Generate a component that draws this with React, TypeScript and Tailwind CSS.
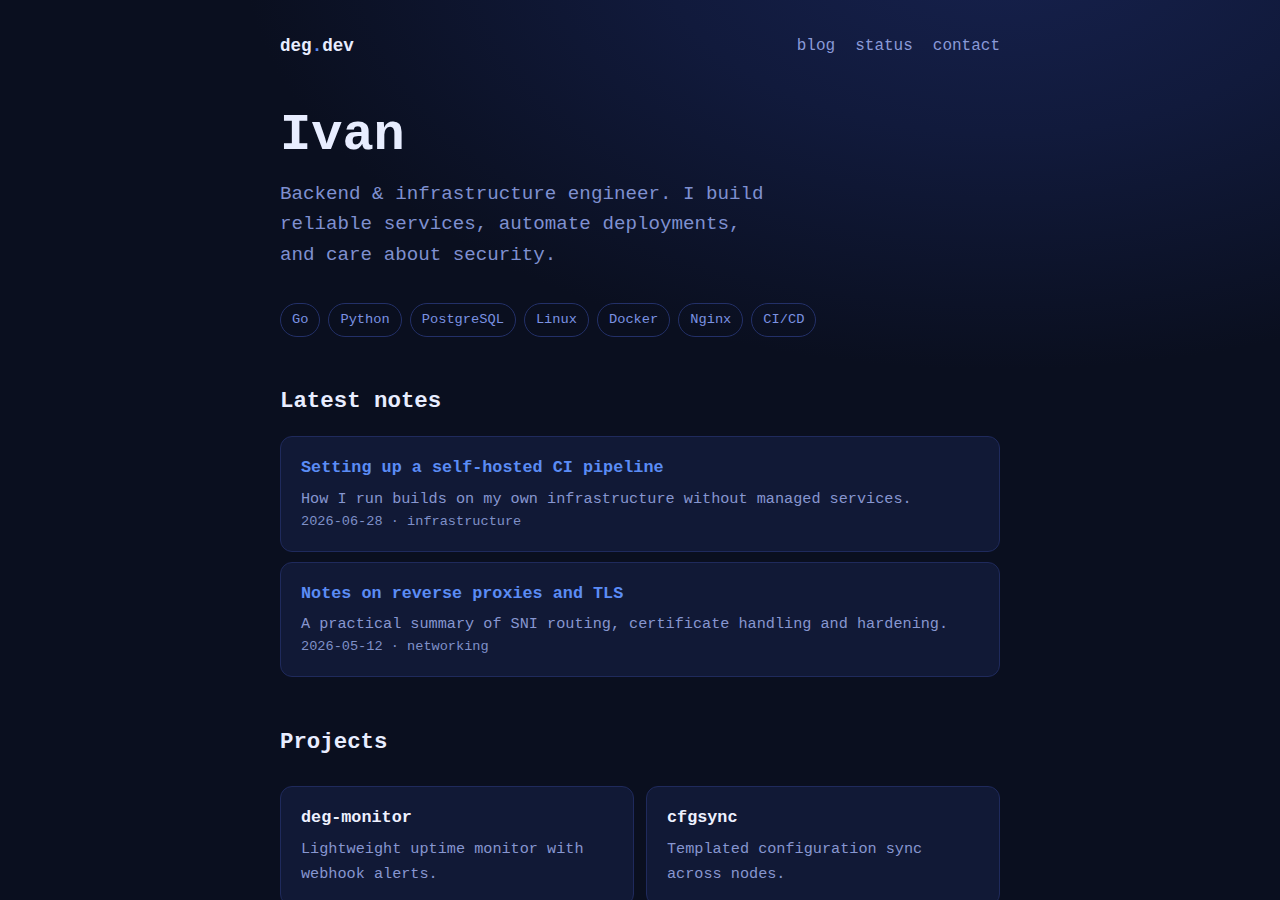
import React from 'react';

const tags = ['Go', 'Python', 'PostgreSQL', 'Linux', 'Docker', 'Nginx', 'CI/CD'];

const notes = [
  {
    title: 'Setting up a self-hosted CI pipeline',
    desc: 'How I run builds on my own infrastructure without managed services.',
    date: '2026-06-28',
    tag: 'infrastructure',
  },
  {
    title: 'Notes on reverse proxies and TLS',
    desc: 'A practical summary of SNI routing, certificate handling and hardening.',
    date: '2026-05-12',
    tag: 'networking',
  },
];

const projects = [
  { name: 'deg-monitor', desc: 'Lightweight uptime monitor with webhook alerts.' },
  { name: 'cfgsync', desc: 'Templated configuration sync across nodes.' },
];

export default function App() {
  return (
    <div className="min-h-screen bg-[#0a0f1f] bg-[radial-gradient(ellipse_760px_430px_at_1000px_-60px,#16214d_0%,#111a3c_45%,#0a0f1f_100%)] bg-no-repeat font-['Liberation_Mono',monospace]">
      <div className="mx-auto w-[720px] pb-16">
        {/* header */}
        <header className="flex items-center justify-between pt-[33px]">
          <a className="text-[17.6px] leading-[1.5] font-bold text-[#e8edff]">
            deg<span className="text-[#5b8cf5]">.</span>dev
          </a>
          <nav className="flex gap-5 text-[16px] leading-[1.5] text-[#8a9ad8]">
            <a>blog</a>
            <a>status</a>
            <a>contact</a>
          </nav>
        </header>

        {/* hero */}
        <section className="mt-12">
          <h1 className="text-[52px] leading-[1.1] font-bold text-[#e8edff]">Ivan</h1>
          <p className="mt-[14px] max-w-[490px] text-[19.2px] leading-[1.6] text-[#7f90d0]">
            Backend &amp; infrastructure engineer. I build reliable services, automate deployments, and care about security.
          </p>
          <div className="mt-8 flex flex-wrap gap-2">
            {tags.map((t) => (
              <span
                key={t}
                className="rounded-full border border-[#233068] px-[11px] py-[6px] text-[13.7px] leading-[1.5] text-[#7b92e2]"
              >
                {t}
              </span>
            ))}
          </div>
        </section>

        {/* notes */}
        <section className="mt-[50px]">
          <h2 className="text-[22.4px] leading-[1.3] font-bold text-[#e8edff]">Latest notes</h2>
          <div className="mt-[20px] flex flex-col gap-[10px]">
            {notes.map((n) => (
              <article
                key={n.title}
                className="rounded-xl border border-[#1f2a5c] bg-[#111936] px-5 py-[18px]"
              >
                <h3 className="text-[16.8px] leading-[1.5] font-bold text-[#5b8cf5]">{n.title}</h3>
                <p className="mt-[6px] text-[15.2px] leading-[1.6] text-[#8796d0]">{n.desc}</p>
                <p className="text-[13.6px] leading-[1.6] text-[#7f90c8]">
                  {n.date} · {n.tag}
                </p>
              </article>
            ))}
          </div>
        </section>

        {/* projects */}
        <section className="mt-[51px]">
          <h2 className="text-[22.4px] leading-[1.3] font-bold text-[#e8edff]">Projects</h2>
          <div className="mt-[29px] grid grid-cols-2 gap-3">
            {projects.map((p) => (
              <article
                key={p.name}
                className="rounded-xl border border-[#1f2a5c] bg-[#111936] px-5 py-[18px]"
              >
                <h3 className="text-[16.8px] leading-[1.5] font-bold text-[#eef1ff]">{p.name}</h3>
                <p className="mt-[7px] text-[15.2px] leading-[1.65] text-[#8796d0]">{p.desc}</p>
              </article>
            ))}
          </div>
        </section>
      </div>
    </div>
  );
}
